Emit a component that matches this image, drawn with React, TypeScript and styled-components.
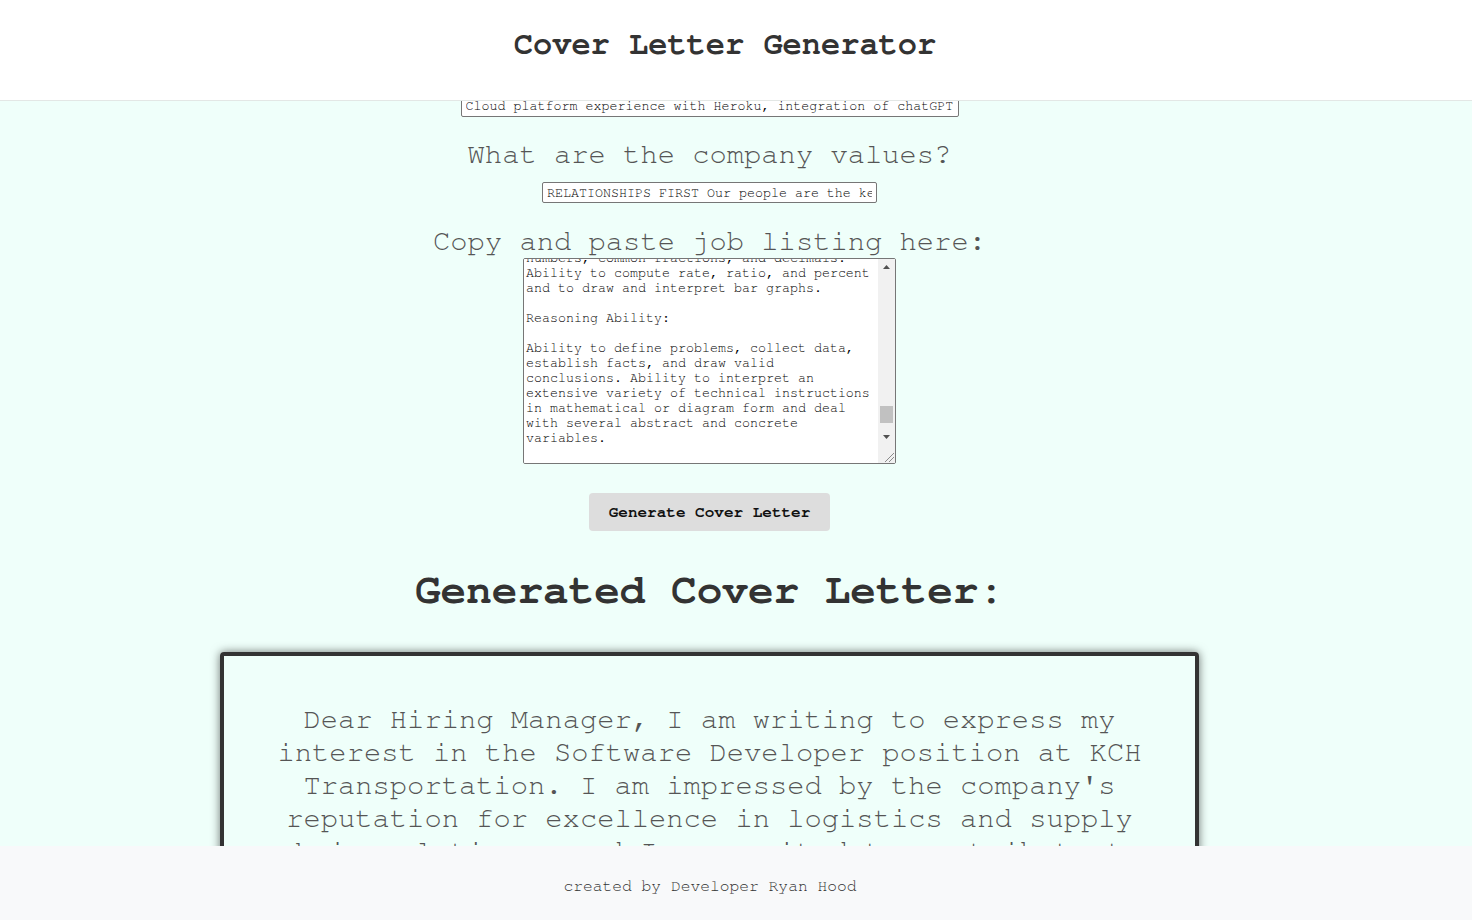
import React, { useLayoutEffect, useRef, useState } from "react";
import styled, { createGlobalStyle } from "styled-components";

const MONO = `"Nimbus Mono PS", "Nimbus Mono L", "FreeMono", "Courier New", "Liberation Mono", monospace`;

const GlobalStyle = createGlobalStyle`
  html { scrollbar-width: none; }
  html::-webkit-scrollbar { display: none; }
  body {
    margin: 0;
    background: #effffa;
    font-family: ${MONO};
  }
`;

const Header = styled.header`
  position: fixed;
  top: 0;
  left: 0;
  right: 0;
  height: 101px;
  box-sizing: border-box;
  background: #ffffff;
  border-bottom: 1px solid #e3e7e5;
  display: flex;
  justify-content: center;
  padding: 26px 22px 0 0;
  z-index: 10;
`;

const Title = styled.h1`
  margin: 0;
  font-size: 32px;
  line-height: 37px;
  font-weight: 700;
  color: #333333;
`;

const Main = styled.main`
  display: flex;
  flex-direction: column;
  align-items: center;
  padding: 140px 53px 220px 0;
`;

const Field = styled.div`
  display: flex;
  flex-direction: column;
  align-items: center;
  margin-bottom: 21.5px;
`;

const Label = styled.label`
  font-size: 28.8px;
  line-height: 33px;
  color: #555555;
`;

const TextInput = styled.input<{ $w: number }>`
  width: ${(p) => p.$w}px;
  height: 21px;
  box-sizing: border-box;
  margin-top: 11px;
  padding: 1px 4px;
  border: 1px solid #767676;
  border-radius: 2px;
  background: #ffffff;
  color: #000000;
  font-family: ${MONO};
  font-size: 13.33px;
`;

const TextAreaFrame = styled.div`
  position: relative;
  width: 373px;
  height: 206px;
`;

const TextArea = styled.textarea`
  display: block;
  width: 100%;
  height: 100%;
  box-sizing: border-box;
  padding: 2px 19px 2px 2px;
  border: 1px solid #767676;
  border-radius: 2px;
  background: #ffffff;
  color: #000000;
  font-family: ${MONO};
  font-size: 13.33px;
  line-height: 15px;
  resize: none;
  scrollbar-width: none;
  &::-webkit-scrollbar {
    display: none;
  }
`;

const ScrollBar = styled.div`
  position: absolute;
  top: 1px;
  right: 1px;
  bottom: 1px;
  width: 17px;
  background: #f1f1f1;
  display: flex;
  flex-direction: column;
  pointer-events: none;
`;

const ScrollButton = styled.div`
  height: 17px;
  flex: none;
  display: flex;
  align-items: center;
  justify-content: center;
`;

const ScrollTrack = styled.div`
  position: relative;
  flex: 1;
`;

const ScrollThumb = styled.div`
  position: absolute;
  left: 2px;
  right: 2px;
  height: 17px;
  background: #c1c1c1;
`;

const ResizeCorner = styled.div`
  height: 17px;
  flex: none;
  background: #f1f1f1;
  display: flex;
  align-items: flex-end;
  justify-content: flex-end;
`;

const GenerateButton = styled.button`
  margin-top: 7.5px;
  height: 38px;
  padding: 0 20px;
  border: none;
  border-radius: 4px;
  background: #dddddd;
  color: #111111;
  font-family: ${MONO};
  font-size: 16px;
  font-weight: 700;
  cursor: pointer;
`;

const ResultHeading = styled.h2`
  margin: 36px 0 37px;
  font-size: 42.7px;
  line-height: 48px;
  font-weight: 700;
  color: #333333;
`;

const LetterCard = styled.div`
  width: 979px;
  box-sizing: border-box;
  border: 4px solid #333333;
  border-radius: 4px;
  box-shadow: 0 0 10px rgba(0, 0, 0, 0.55);
  padding: 47px 50px;
`;

const LetterText = styled.p`
  margin: 0;
  font-size: 28.8px;
  line-height: 33px;
  color: #555555;
  text-align: center;
`;

const Footer = styled.footer`
  position: fixed;
  left: 0;
  right: 0;
  bottom: 0;
  height: 74px;
  box-sizing: border-box;
  background: #f8f9fa;
  display: flex;
  justify-content: center;
  padding: 31px 52px 0 0;
  z-index: 10;
`;

const Credit = styled.p`
  margin: 0;
  font-size: 16.3px;
  line-height: 19px;
  color: #333333;
`;

const JOB_LISTING = `Software Developer
KCH Transportation

Job Summary:

KCH Transportation is seeking a Software Developer to design, build, and maintain the applications that power our logistics and supply chain operations. The Software Developer works closely with operations, dispatch, and accounting teams to deliver reliable tools that help our drivers and customers move freight safely and on time.

Essential Duties and Responsibilities:

Design, develop, test, and deploy web applications and internal tools.
Maintain and improve existing systems, including transportation management and dispatch software.
Integrate third-party APIs, EDI feeds, and telematics data into company platforms.
Write clean, well-documented, and maintainable code.
Participate in code reviews and contribute to team standards and best practices.
Troubleshoot, debug, and resolve production issues in a timely manner.
Collaborate with stakeholders to gather requirements and translate them into technical solutions.
Build and maintain reports and dashboards for operations and management.
Support cloud infrastructure, deployments, and monitoring.
Other duties as assigned.

Qualifications:

To perform this job successfully, an individual must be able to perform each essential duty satisfactorily. The requirements listed below are representative of the knowledge, skill, and/or ability required.

Education and/or Experience:

Bachelor's degree in Computer Science or a related field, or equivalent combination of education and experience. Two or more years of professional software development experience preferred.

Technical Skills:

Experience with JavaScript, React, Node.js, and SQL databases. Familiarity with cloud platforms such as Heroku, AWS, or Azure. Knowledge of REST APIs, version control with Git, and agile development practices.

Language Skills:

Ability to read, analyze, and interpret technical procedures and business documents. Ability to write reports, business correspondence, and documentation. Ability to effectively present information and respond to questions from managers, employees, and customers.

Mathematical Skills:

Ability to add, subtract, multiply, and divide in all units of measure, using whole numbers, common fractions, and decimals. Ability to compute rate, ratio, and percent and to draw and interpret bar graphs.

Reasoning Ability:

Ability to define problems, collect data, establish facts, and draw valid conclusions. Ability to interpret an extensive variety of technical instructions in mathematical or diagram form and deal with several abstract and concrete variables.
`;

const LETTER =
  "Dear Hiring Manager, I am writing to express my interest in the Software Developer position at KCH Transportation. I am impressed by the company's reputation for excellence in logistics and supply chain solutions, and I am excited to contribute to the team's continued success. With my experience deploying applications on cloud platforms such as Heroku and integrating chatGPT into web applications, I am confident that I can help KCH Transportation build reliable and innovative software. I share your belief that relationships come first, and I would welcome the opportunity to collaborate with your people to deliver outstanding service to your customers. Thank you for your time and consideration. Sincerely, Ryan Hood";

const SKILLS = "Cloud platform experience with Heroku, integration of chatGPT";
const VALUES =
  "RELATIONSHIPS FIRST Our people are the key to our success, and we treat every customer, driver, and partner with respect.";

const TRACK_TRAVEL = 130;

export default function App() {
  const skillsRef = useRef<HTMLInputElement>(null);
  const listingRef = useRef<HTMLTextAreaElement>(null);
  const [thumbTop, setThumbTop] = useState(TRACK_TRAVEL);

  const syncThumb = () => {
    const ta = listingRef.current;
    if (!ta) return;
    const max = ta.scrollHeight - ta.clientHeight;
    setThumbTop(max > 0 ? (ta.scrollTop / max) * TRACK_TRAVEL : 0);
  };

  useLayoutEffect(() => {
    const align = () => {
      const ta = listingRef.current;
      if (ta) ta.scrollTop = ta.scrollHeight;
      syncThumb();
      const el = skillsRef.current;
      if (el) {
        const r = el.getBoundingClientRect();
        window.scrollTo(0, window.scrollY + r.bottom - 117);
      }
    };
    align();
    const t = window.setTimeout(align, 60);
    return () => window.clearTimeout(t);
  }, []);

  return (
    <>
      <GlobalStyle />
      <Header>
        <Title>Cover Letter Generator</Title>
      </Header>
      <Main>
        <Field>
          <Label>What is your name?</Label>
          <TextInput $w={170} defaultValue="Ryan Hood" />
        </Field>
        <Field>
          <Label>What job are you applying for?</Label>
          <TextInput $w={170} defaultValue="Software Developer" />
        </Field>
        <Field>
          <Label>What is the company name?</Label>
          <TextInput $w={170} defaultValue="KCH Transportation" />
        </Field>
        <Field>
          <Label>What are your skills?</Label>
          <TextInput ref={skillsRef} $w={498} defaultValue={SKILLS} />
        </Field>
        <Field>
          <Label>What are the company values?</Label>
          <TextInput $w={335} defaultValue={VALUES} />
        </Field>
        <Field>
          <Label>Copy and paste job listing here:</Label>
          <TextAreaFrame>
            <TextArea ref={listingRef} defaultValue={JOB_LISTING} onScroll={syncThumb} />
            <ScrollBar aria-hidden="true">
              <ScrollButton>
                <svg width="7" height="4" viewBox="0 0 7 4">
                  <polygon points="3.5,0 7,4 0,4" fill="#505050" />
                </svg>
              </ScrollButton>
              <ScrollTrack>
                <ScrollThumb style={{ top: thumbTop }} />
              </ScrollTrack>
              <ScrollButton>
                <svg width="7" height="4" viewBox="0 0 7 4">
                  <polygon points="0,0 7,0 3.5,4" fill="#505050" />
                </svg>
              </ScrollButton>
              <ResizeCorner>
                <svg width="12" height="12" viewBox="0 0 12 12">
                  <line x1="2" y1="11" x2="11" y2="2" stroke="#8a8a8a" strokeWidth="1" />
                  <line x1="6" y1="11" x2="11" y2="6" stroke="#8a8a8a" strokeWidth="1" />
                </svg>
              </ResizeCorner>
            </ScrollBar>
          </TextAreaFrame>
        </Field>
        <GenerateButton type="button">Generate Cover Letter</GenerateButton>
        <ResultHeading>Generated Cover Letter:</ResultHeading>
        <LetterCard>
          <LetterText>{LETTER}</LetterText>
        </LetterCard>
      </Main>
      <Footer>
        <Credit>created by Developer Ryan Hood</Credit>
      </Footer>
    </>
  );
}
